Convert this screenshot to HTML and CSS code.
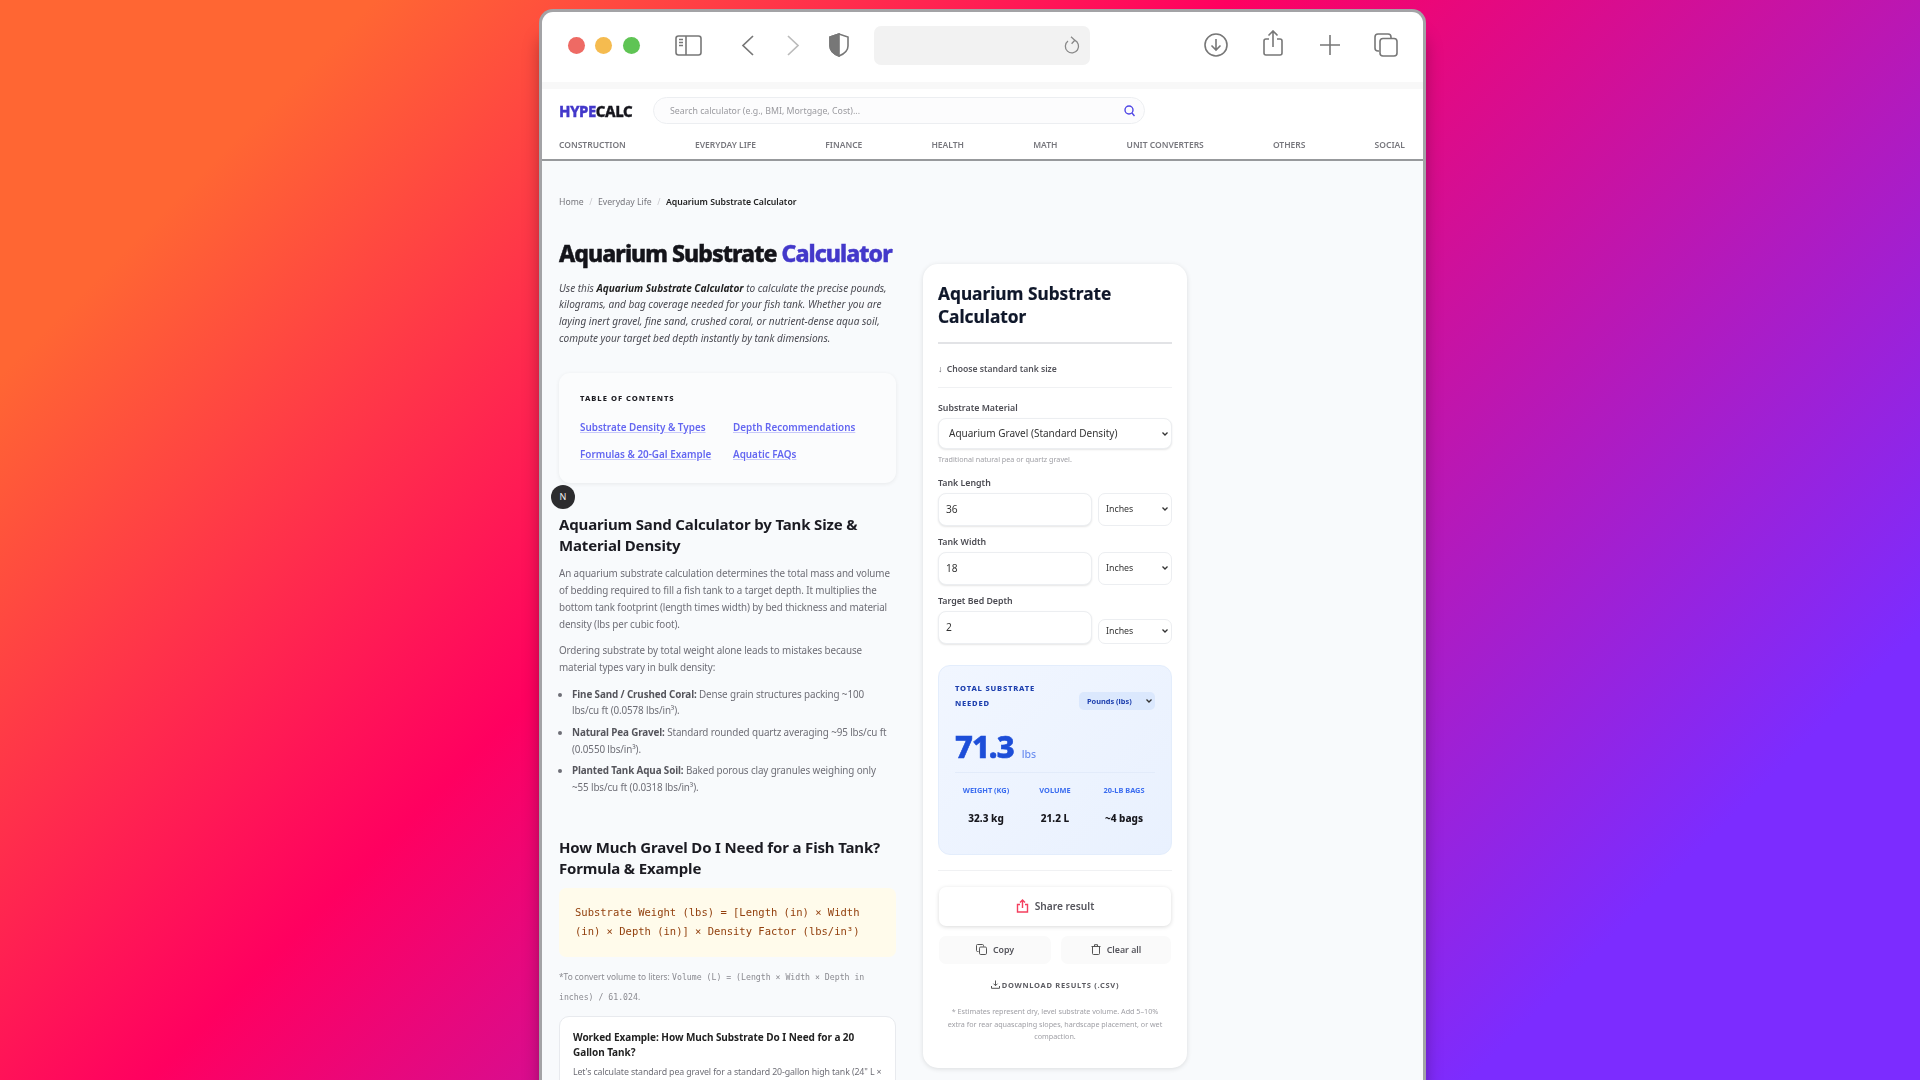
FILE: index.html
```html
<!DOCTYPE html>
<html lang="en">
<head>
    <meta charset="UTF-8">
    <meta name="viewport" content="width=device-width, initial-scale=1.0">
    <title>Aquarium Substrate Calculator</title>
    <link rel="stylesheet" href="styles.css">
</head>
<body>
    <div class="window">
        <div class="toolbar">
            <span class="dot dot-red"></span>
            <span class="dot dot-yellow"></span>
            <span class="dot dot-green"></span>
            <svg class="tool tool-sidebar" width="27" height="21" viewBox="0 0 27 21" fill="none" stroke="#777" stroke-width="1.6">
                <rect x="1" y="1" width="25" height="19" rx="2.5"/>
                <path d="M11 1v19"/>
                <path d="M4 4.500h4M4 7.500h4M4 10.500h4" stroke-width="1.3"/>
            </svg>
            <svg class="tool tool-back" width="13" height="21" viewBox="0 0 13 21" fill="none" stroke="#777" stroke-width="1.7">
                <path d="M12 1 2 10.500 12 20"/>
            </svg>
            <svg class="tool tool-forward" width="13" height="21" viewBox="0 0 13 21" fill="none" stroke="#bbb" stroke-width="1.7">
                <path d="M1 1 11 10.500 1 20"/>
            </svg>
            <svg class="tool tool-shield" width="20" height="24" viewBox="0 0 20 24" fill="none" stroke="#777" stroke-width="1.6">
                <path d="M10 1 1 4v9c0 5 4 8 9 10 5-2 9-5 9-10V4z"/>
                <path d="M10 1 1 4v9c0 5 4 8 9 10z" fill="#777"/>
            </svg>
            <div class="urlbar">
                <svg width="16" height="18" viewBox="0 0 16 18" fill="none" stroke="#888" stroke-width="1.3">
                    <path d="M10.500 4.200A6.600 6.600 0 1 1 4 5"/>
                    <path d="M7 0.800 10.800 4.200 7.600 7.800"/>
                </svg>
            </div>
            <svg class="tool tool-download" width="24" height="24" viewBox="0 0 24 24" fill="none" stroke="#777" stroke-width="1.6">
                <circle cx="12" cy="12" r="11"/>
                <path d="M12 6v11M7.500 12.500 12 17l4.500-4.500"/>
            </svg>
            <svg class="tool tool-share" width="20" height="26" viewBox="0 0 20 26" fill="none" stroke="#777" stroke-width="1.6">
                <path d="M6 9H3a2 2 0 0 0-2 2v12a2 2 0 0 0 2 2h14a2 2 0 0 0 2-2V11a2 2 0 0 0-2-2h-3"/>
                <path d="M10 17V1M5.500 5.500 10 1l4.500 4.500"/>
            </svg>
            <svg class="tool tool-plus" width="20" height="20" viewBox="0 0 20 20" fill="none" stroke="#777" stroke-width="1.6">
                <path d="M10 0v20M0 10h20"/>
            </svg>
            <svg class="tool tool-tabs" width="24" height="24" viewBox="0 0 24 24" fill="none" stroke="#777" stroke-width="1.6">
                <path d="M5 18H4a3 3 0 0 1-3-3V4a3 3 0 0 1 3-3h10a3 3 0 0 1 3 3v1"/>
                <rect x="6" y="5.500" width="17" height="17.500" rx="3"/>
            </svg>
        </div>
        <div class="toolbar-band"></div>

        <header class="site-header">
            <div class="header-top">
                <a class="logo"><span class="logo-hype">HYPE</span>CALC</a>
                <div class="search">
                    <span>Search calculator (e.g., BMI, Mortgage, Cost)...</span>
                    <svg width="11" height="12" viewBox="0 0 11 12" fill="none" stroke="#4f46e5" stroke-width="1.4">
                        <circle cx="5" cy="5" r="4"/>
                        <path d="M8 8l2.500 3"/>
                    </svg>
                </div>
            </div>
            <nav class="main-nav">
                <a>Construction</a>
                <a>Everyday Life</a>
                <a>Finance</a>
                <a>Health</a>
                <a>Math</a>
                <a>Unit Converters</a>
                <a>Others</a>
                <a>Social</a>
            </nav>
        </header>

        <main class="page">
            <div class="breadcrumb">
                <a>Home</a><i>/</i><a>Everyday Life</a><i>/</i><b>Aquarium Substrate Calculator</b>
            </div>
            <div class="columns">
                <article class="article">
                    <h1>Aquarium Substrate <span>Calculator</span></h1>
                    <p class="intro">Use this <b>Aquarium Substrate Calculator</b> to calculate the precise pounds, kilograms, and bag coverage needed for your fish tank. Whether you are laying inert gravel, fine sand, crushed coral, or nutrient-dense aqua soil, compute your target bed depth instantly by tank dimensions.</p>

                    <div class="toc">
                        <div class="toc-title">Table of Contents</div>
                        <div class="toc-links">
                            <a>Substrate Density &amp; Types</a>
                            <a>Depth Recommendations</a>
                            <a>Formulas &amp; 20-Gal Example</a>
                            <a>Aquatic FAQs</a>
                        </div>
                        <span class="dev-badge">N</span>
                    </div>

                    <h2>Aquarium Sand Calculator by Tank Size &amp; Material Density</h2>
                    <p>An aquarium substrate calculation determines the total mass and volume of bedding required to fill a fish tank to a target depth. It multiplies the bottom tank footprint (length times width) by bed thickness and material density (lbs per cubic foot).</p>
                    <p>Ordering substrate by total weight alone leads to mistakes because material types vary in bulk density:</p>
                    <ul>
                        <li><b>Fine Sand / Crushed Coral:</b> Dense grain structures packing ~100 lbs/cu ft (0.0578 lbs/in³).</li>
                        <li><b>Natural Pea Gravel:</b> Standard rounded quartz averaging ~95 lbs/cu ft (0.0550 lbs/in³).</li>
                        <li><b>Planted Tank Aqua Soil:</b> Baked porous clay granules weighing only ~55 lbs/cu ft (0.0318 lbs/in³).</li>
                    </ul>

                    <h2 class="second">How Much Gravel Do I Need for a Fish Tank? Formula &amp; Example</h2>
                    <div class="formula">Substrate Weight (lbs) = [Length (in) × Width (in) × Depth (in)] × Density Factor (lbs/in³)</div>
                    <p class="note">*To convert volume to liters: <code>Volume (L) = (Length × Width × Depth in inches) / 61.024</code>.</p>
                    <div class="worked">
                        <h3>Worked Example: How Much Substrate Do I Need for a 20 Gallon Tank?</h3>
                        <p>Let's calculate standard pea gravel for a standard 20-gallon high tank (24" L × 12" W) at a 2" bed depth.</p>
                    </div>
                </article>

                <aside class="calc">
                    <h2 class="calc-title">Aquarium Substrate Calculator</h2>
                    <div class="preset">↓ &nbsp;Choose standard tank size</div>

                    <label class="field-label">Substrate Material</label>
                    <select class="material">
                        <option>Aquarium Gravel (Standard Density)</option>
                    </select>
                    <div class="hint">Traditional natural pea or quartz gravel.</div>

                    <label class="field-label">Tank Length</label>
                    <div class="field-row">
                        <input type="text" value="36">
                        <select><option>Inches</option></select>
                    </div>
                    <label class="field-label">Tank Width</label>
                    <div class="field-row">
                        <input type="text" value="18">
                        <select><option>Inches</option></select>
                    </div>
                    <label class="field-label">Target Bed Depth</label>
                    <div class="field-row field-row-end">
                        <input type="text" value="2">
                        <select class="short"><option>Inches</option></select>
                    </div>

                    <section class="result">
                        <div class="result-head">
                            <div class="result-title">Total Substrate Needed</div>
                            <select class="unit"><option>Pounds (lbs)</option></select>
                        </div>
                        <div class="result-value">71.3 <span>lbs</span></div>
                        <div class="result-grid">
                            <div><small>Weight (kg)</small><b>32.3 kg</b></div>
                            <div><small>Volume</small><b>21.2 L</b></div>
                            <div><small>20-lb Bags</small><b>~4 bags</b></div>
                        </div>
                    </section>

                    <div class="actions">
                        <button class="share">
                            <svg width="13" height="14" viewBox="0 0 13 14" fill="none" stroke="#f43f5e" stroke-width="1.400">
                                <path d="M4 5.500H1.500v7.500h10V5.500H9"/>
                                <path d="M6.500 9V1M4 3.500 6.500 1 9 3.500"/>
                            </svg>
                            Share result
                        </button>
                        <div class="action-row">
                            <button>
                                <svg width="11" height="11" viewBox="0 0 11 11" fill="none" stroke="#555" stroke-width="1">
                                    <path d="M2.500 7.500h-1a1 1 0 0 1-1-1v-5a1 1 0 0 1 1-1h5a1 1 0 0 1 1 1v1"/>
                                    <rect x="3.500" y="3" width="7" height="7.500" rx="1.200"/>
                                </svg>
                                Copy
                            </button>
                            <button>
                                <svg width="10" height="11" viewBox="0 0 10 11" fill="none" stroke="#555" stroke-width="1">
                                    <path d="M1.500 2.500v7a1 1 0 0 0 1 1h5a1 1 0 0 0 1-1v-7M.5 2.500h9M3.500 2.500V.7h3v1.800"/>
                                </svg>
                                Clear all
                            </button>
                        </div>
                        <a class="download">
                            <svg width="9" height="9" viewBox="0 0 9 9" fill="none" stroke="#555" stroke-width="1">
                                <path d="M4.500 .5v5M2.500 3.700l2 2 2-2M.5 6v2.300h8V6"/>
                            </svg>
                            Download Results (.CSV)
                        </a>
                        <p class="disclaimer">* Estimates represent dry, level substrate volume. Add 5–10% extra for rear aquascaping slopes, hardscape placement, or wet compaction.</p>
                    </div>
                </aside>
            </div>
        </main>
    </div>
</body>
</html>
```

FILE: styles.css
```css
html, body {
    height: 100%;
    margin: 0;
    overflow: hidden;
}
body {
    padding: 9px 0 0 539px;
    box-sizing: border-box;
    font-family: "Noto Sans", "Open Sans", sans-serif;
    background: linear-gradient(135deg, #ff6633 12.5%, #ff0060 41%, #7c2cff 85%);
}
a {
    color: inherit;
    text-decoration: none;
}

/* browser window */
.window {
    width: 887px;
    height: 1080px;
    box-sizing: border-box;
    background: #fff;
    border: 3px solid #a3a3a6;
    border-bottom: 0;
    border-radius: 14px 14px 0 0;
    overflow: hidden;
    box-shadow: 0 25px 18px -2px rgba(0, 0, 0, 0.35);
    filter: blur(0.3px);
}
.toolbar {
    height: 70px;
    padding: 0 0 4px 25.5px;
    box-sizing: border-box;
    display: flex;
    align-items: center;
}
.dot {
    width: 17px;
    height: 17px;
    border-radius: 50%;
    margin-right: 10.5px;
}
.dot-red { background: #ee6a64; }
.dot-yellow { background: #f5bb4f; }
.dot-green { background: #5fc454; }
.tool { flex: none; }
.tool-sidebar { margin-left: 25px; }
.tool-back { margin-left: 39px; }
.tool-forward { margin-left: 33px; }
.tool-shield { margin-left: 29px; }
.urlbar {
    width: 216px;
    height: 39px;
    margin-left: 25px;
    padding-right: 10px;
    box-sizing: border-box;
    background: #f2f2f2;
    border-radius: 7px;
    display: flex;
    align-items: center;
    justify-content: flex-end;
}
.tool-download { margin-left: 114px; }
.tool-share { margin-left: 35px; margin-top: -4px; }
.tool-plus { margin-left: 37px; }
.tool-tabs { margin-left: 34px; }
.toolbar-band {
    height: 7px;
    background: #f8f8f8;
}

/* site header */
.site-header {
    height: 72px;
    padding: 0 18px 0 17px;
    box-sizing: border-box;
    border-bottom: 2px solid #97999c;
}
.header-top {
    height: 42px;
    padding-top: 1px;
    display: flex;
    align-items: center;
    box-sizing: border-box;
}
.logo {
    width: 94px;
    font-size: 15px;
    font-weight: 800;
    letter-spacing: -0.5px;
    -webkit-text-stroke: 0.3px currentColor;
    color: #16161d;
}
.logo-hype { color: #4338ca; }
.search {
    width: 492px;
    height: 27px;
    padding: 0 9px 0 16px;
    box-sizing: border-box;
    border: 1px solid #eceef1;
    border-radius: 14px;
    background: #fcfcfd;
    display: flex;
    align-items: center;
    justify-content: space-between;
    font-size: 8.8px;
    color: #9a9a9f;
}
.main-nav {
    margin-top: 7px;
    display: flex;
    justify-content: space-between;
    font-size: 8.5px;
    font-weight: 600;
    line-height: 14px;
    text-transform: uppercase;
    color: #77777d;
}

/* page */
.page {
    height: 920px;
    padding: 34px 17px 0;
    box-sizing: border-box;
    background: #f8fafc;
}
.breadcrumb {
    font-size: 8.7px;
    line-height: 14px;
    color: #77777d;
}
.breadcrumb i {
    margin: 0 5.5px;
    font-style: normal;
    color: #c9c9cd;
}
.breadcrumb b {
    font-weight: 600;
    color: #222;
}
.columns {
    margin-top: 28px;
    display: grid;
    grid-template-columns: 337px 264px;
    column-gap: 27px;
    align-items: start;
}
.article h1 {
    margin: 0;
    font-size: 23px;
    font-weight: 800;
    line-height: 32px;
    letter-spacing: -0.95px;
    -webkit-text-stroke: 0.45px currentColor;
    white-space: nowrap;
    color: #14141a;
}
.article h1 span { color: #4338ca; }
.article p {
    margin: 0 0 10px;
    font-size: 9.85px;
    line-height: 16.7px;
    letter-spacing: -0.12px;
    color: #6e6e76;
}
.article .intro {
    margin: 10.6px 0 26.5px;
    font-size: 10.05px;
    font-style: italic;
    letter-spacing: 0;
    color: #4a4a52;
}
.intro b {
    font-weight: 700;
    color: #222;
}

.toc {
    position: relative;
    height: 110px;
    padding: 19px 21px;
    box-sizing: border-box;
    background: #fbfcfd;
    border-radius: 11px;
    box-shadow: 0 1px 4px rgba(0, 0, 0, 0.07);
}
.toc-title {
    font-size: 7.6px;
    font-weight: 800;
    line-height: 12px;
    letter-spacing: 1px;
    text-transform: uppercase;
    color: #1c1c22;
}
.toc-links {
    margin-top: 14px;
    display: grid;
    grid-template-columns: 153px auto;
    row-gap: 9px;
    font-size: 9.9px;
    font-weight: 600;
    line-height: 18px;
    color: #6366f1;
}
.toc-links a {
    justify-self: start;
    text-decoration: underline;
    text-decoration-color: #c7c8fa;
}
.dev-badge {
    position: absolute;
    left: -8px;
    top: 112px;
    width: 24px;
    height: 24px;
    border-radius: 50%;
    background: #2c2c2e;
    color: #eee;
    font-size: 9px;
    line-height: 24px;
    text-align: center;
}

.article h2 {
    margin: 31.5px 0 9px;
    font-size: 15px;
    font-weight: 700;
    line-height: 21px;
    letter-spacing: -0.15px;
    color: #1b1b22;
}
.article h2.second {
    margin: 41.5px 0 8.5px;
}
.article ul {
    margin: 0;
    padding: 0 4px 0 13px;
    font-size: 9.85px;
    line-height: 16.7px;
    letter-spacing: -0.12px;
    color: #6e6e76;
}
.article li {
    margin-bottom: 5px;
}
.article li b {
    font-weight: 700;
    color: #55555c;
}
.formula {
    padding: 15.5px 16px;
    background: #fffbeb;
    border-radius: 7px;
    font-family: "DejaVu Sans Mono", monospace;
    font-size: 10.5px;
    line-height: 19px;
    color: #92400e;
}
.article .note {
    margin: 10.5px 0 9px;
    font-size: 8.35px;
    line-height: 19px;
    letter-spacing: 0;
    color: #8a8a90;
}
.note code {
    font-family: "DejaVu Sans Mono", monospace;
    font-size: 8.2px;
}
.worked {
    padding: 12.25px 13px 20px;
    background: #fff;
    border: 1px solid #e8eaee;
    border-radius: 10px;
}
.worked h3 {
    margin: 0 0 4.4px;
    font-size: 10px;
    font-weight: 700;
    line-height: 15px;
    letter-spacing: -0.05px;
    color: #222;
}
.article .worked p {
    font-size: 8.8px;
}

/* calculator card */
.calc {
    height: 804px;
    margin-top: 27px;
    padding: 17.5px 15px 0;
    box-sizing: border-box;
    background: #fff;
    border-radius: 15px;
    box-shadow: 0 1px 5px rgba(0, 0, 0, 0.12);
}
.calc-title {
    margin: 0;
    padding-bottom: 14px;
    border-bottom: 2px solid #e2e3e6;
    font-size: 17.3px;
    font-weight: 700;
    line-height: 23px;
    -webkit-text-stroke: 0.2px currentColor;
    color: #0f172a;
}
.preset {
    padding: 19.5px 0 10.5px;
    border-bottom: 1px solid #f0f1f3;
    font-size: 8.6px;
    font-weight: 600;
    line-height: 13px;
    color: #55555c;
}
.field-label {
    display: block;
    margin: 0 0 3px;
    font-size: 8.8px;
    font-weight: 600;
    line-height: 13px;
    color: #4b4b52;
}
.preset + .field-label { margin-top: 14.5px; }
select, input {
    box-sizing: border-box;
    font-family: inherit;
    color: #333;
    background: #fff;
    border: 1px solid #eceef1;
    outline: none;
}
select {
    appearance: none;
    background: #fff url("data:image/svg+xml,%3Csvg xmlns='http://www.w3.org/2000/svg' width='6' height='4' fill='none' stroke='%23333' stroke-width='1.3'%3E%3Cpath d='M.5 .5 3 3 5.500 .5'/%3E%3C/svg%3E") no-repeat right 3px center;
}
.material {
    width: 100%;
    height: 31px;
    padding: 0 0 2px 10px;
    border-radius: 8px;
    box-shadow: 0 1px 2px rgba(0, 0, 0, 0.1);
    font-size: 10px;
}
.hint {
    margin: 5px 0 12.5px;
    font-size: 7.2px;
    line-height: 10px;
    color: #a0a0a6;
}
.field-row {
    display: flex;
    align-items: center;
    gap: 6px;
    margin-bottom: 10px;
}
.field-row-end { align-items: flex-end; margin-bottom: 21px; }
.field-row input {
    width: 154px;
    height: 33px;
    padding: 0 7px;
    border-radius: 8px;
    box-shadow: 0 1px 2px rgba(0, 0, 0, 0.1);
    font-size: 10.2px;
}
.field-row select {
    width: 74px;
    height: 33px;
    padding-left: 7px;
    border-radius: 7px;
    font-size: 8.8px;
}
.field-row select.short { height: 25px; }

.result {
    height: 190px;
    padding: 15.5px 16px 0;
    box-sizing: border-box;
    background: linear-gradient(135deg, #f1f6ff, #e9f1fe);
    border: 1px solid #e3edfc;
    border-radius: 12px;
}
.result-head {
    display: flex;
    align-items: center;
    justify-content: space-between;
}
.result-title {
    width: 90px;
    font-size: 7.6px;
    font-weight: 800;
    line-height: 15px;
    letter-spacing: 0.8px;
    text-transform: uppercase;
    color: #1e40af;
}
select.unit {
    width: 76px;
    height: 18px;
    margin-top: 9px;
    padding-left: 8px;
    border: 0;
    border-radius: 5px;
    background-color: #dbe8fd;
    color: #1e40af;
    font-size: 7.4px;
    font-weight: 700;
}
.result-value {
    margin-top: 12.5px;
    font-size: 31px;
    font-weight: 800;
    line-height: 44px;
    letter-spacing: -1px;
    -webkit-text-stroke: 0.6px currentColor;
    color: #1d4ed8;
}
.result-value span {
    margin-left: 1px;
    font-size: 10.5px;
    font-weight: 500;
    line-height: 1;
    letter-spacing: 0;
    -webkit-text-stroke: 0;
    color: #6d8ff0;
}
.result-grid {
    margin-top: 4px;
    padding-top: 11px;
    border-top: 1px solid #e2ebfa;
    display: grid;
    grid-template-columns: repeat(3, 69px);
    justify-content: center;
    text-align: center;
}
.result-grid small {
    display: block;
    font-size: 7.4px;
    font-weight: 700;
    line-height: 12px;
    text-transform: uppercase;
    color: #3b6df0;
}
.result-grid b {
    display: block;
    margin-top: 15px;
    font-size: 10px;
    font-weight: 800;
    line-height: 14px;
    color: #17171d;
}

.actions {
    margin-top: 15px;
    padding-top: 16px;
    border-top: 1px solid #f0f1f3;
}
button {
    display: flex;
    align-items: center;
    justify-content: center;
    gap: 6px;
    width: 100%;
    border: 0;
    font-family: inherit;
    color: #55555c;
}
.share {
    height: 39px;
    margin: 0 1px;
    width: 232px;
    background: #fff;
    border-radius: 7px;
    box-shadow: 0 1px 4px rgba(0, 0, 0, 0.15);
    font-size: 10.2px;
    font-weight: 600;
}
.action-row {
    margin: 10px 1px 0;
    display: grid;
    grid-template-columns: 112px 110px;
    column-gap: 10px;
}
.action-row button {
    height: 28px;
    background: #fafafa;
    border-radius: 7px;
    font-size: 8.8px;
    font-weight: 600;
}
.download {
    margin-top: 15px;
    display: flex;
    align-items: center;
    justify-content: center;
    gap: 2px;
    font-size: 7.5px;
    font-weight: 700;
    line-height: 12px;
    letter-spacing: 0.7px;
    text-transform: uppercase;
    color: #5c5c62;
}
.disclaimer {
    margin: 14.75px 8px 0;
    font-size: 7.2px;
    line-height: 12.5px;
    text-align: center;
    color: #a0a0a6;
}
```
